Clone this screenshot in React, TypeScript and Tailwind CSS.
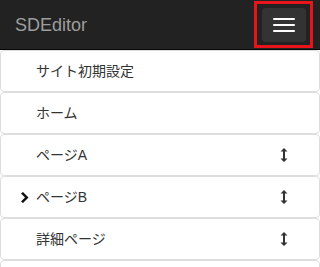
import React from 'react';

interface PageItem {
  label: string;
  sortable: boolean;
  active?: boolean;
}

const items: PageItem[] = [
  { label: 'サイト初期設定', sortable: false },
  { label: 'ホーム', sortable: false },
  { label: 'ページA', sortable: true },
  { label: 'ページB', sortable: true, active: true },
  { label: '詳細ページ', sortable: true },
  { label: '', sortable: false },
];

const ResizeVertical = () => (
  <svg width="8" height="16" viewBox="0 0 8 16" className="text-[#333]">
    <path d="M4 1 L7.5 4.5 L5 4.5 L5 11.5 L7.5 11.5 L4 15 L0.5 11.5 L3 11.5 L3 4.5 L0.5 4.5 Z" fill="currentColor" />
  </svg>
);

const Chevron = () => (
  <svg width="9" height="11" viewBox="0 0 9 11">
    <path d="M1 1.5 L3 0 L8.5 5.5 L3 11 L1 9.5 L5 5.5 Z" fill="#111" />
  </svg>
);

export default function App() {
  return (
    <div className="w-[320px] h-[267px] overflow-hidden bg-white font-['Liberation_Sans','Noto_Sans_CJK_JP',sans-serif]">
      {/* Navbar */}
      <div className="h-[50px] bg-[#222] border-b border-[#080808] flex items-center justify-between">
        <span className="pl-[15px] text-[18px] text-[#9d9d9d] leading-none">SDEditor</span>
        <div className="mr-[7px] w-[59px] h-[47px] border-[3px] border-[#e8141c] flex items-center justify-center">
          <div className="w-[44px] h-[34px] bg-[#333] rounded flex flex-col items-center justify-center gap-[4px]">
            <span className="block w-[22px] h-[2px] bg-white rounded-[1px]" />
            <span className="block w-[22px] h-[2px] bg-white rounded-[1px]" />
            <span className="block w-[22px] h-[2px] bg-white rounded-[1px]" />
          </div>
        </div>
      </div>

      {/* Page list */}
      <div className="flex flex-col">
        {items.map((item, i) => (
          <div
            key={i}
            className="h-[42px] shrink-0 border border-[#ddd] rounded-[4px] bg-white flex items-center text-[14px] text-[#333]"
          >
            <div className="w-[35px] shrink-0 flex justify-end pr-[7px]">
              {item.active && <Chevron />}
            </div>
            <span className="flex-1">{item.label}</span>
            {item.sortable && (
              <div className="w-[38px] flex justify-start mr-[1px]">
                <ResizeVertical />
              </div>
            )}
          </div>
        ))}
      </div>
    </div>
  );
}
